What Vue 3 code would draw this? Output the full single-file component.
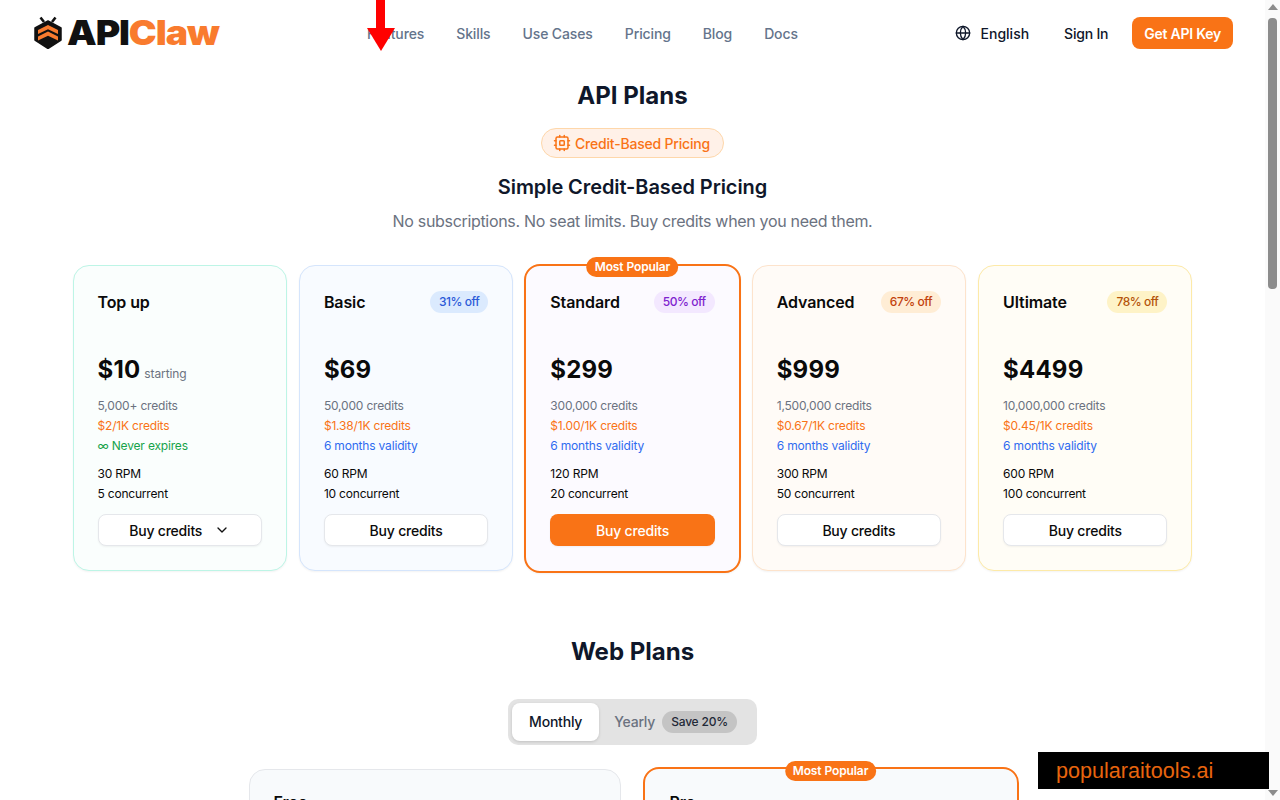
<script setup>
const navLinks = ['Features', 'Skills', 'Use Cases', 'Pricing', 'Blog', 'Docs']

const apiPlans = [
  { name: 'Top up', theme: 'teal', price: '$10', unit: 'starting', credits: '5,000+ credits', rate: '$2/1K credits', never: true, rpm: '30 RPM', conc: '5 concurrent', dropdown: true },
  { name: 'Basic', theme: 'blue', off: '31% off', price: '$69', credits: '50,000 credits', rate: '$1.38/1K credits', rpm: '60 RPM', conc: '10 concurrent' },
  { name: 'Standard', theme: 'purple', off: '50% off', price: '$299', credits: '300,000 credits', rate: '$1.00/1K credits', rpm: '120 RPM', conc: '20 concurrent', popular: true },
  { name: 'Advanced', theme: 'orange', off: '67% off', price: '$999', credits: '1,500,000 credits', rate: '$0.67/1K credits', rpm: '300 RPM', conc: '50 concurrent' },
  { name: 'Ultimate', theme: 'amber', off: '78% off', price: '$4499', credits: '10,000,000 credits', rate: '$0.45/1K credits', rpm: '600 RPM', conc: '100 concurrent' }
]
</script>

<template>
  <div class="shell">
    <div class="page">
      <header class="topbar">
        <a class="logo">
          <svg width="28" height="33" viewBox="0 0 28 33">
            <path d="M14 5 L27 12 V24 L14 32.5 L1 24 V12 Z" fill="#111" stroke="#111" stroke-width="1.5" stroke-linejoin="round" />
            <path d="M10 6 L6.5 1.5 M18 6 L21.5 1.5" stroke="#111" stroke-width="2.6" fill="none" />
            <path d="M4 14 L14 9 L24 14 V18 L14 13.2 L4 18 Z" fill="#f97b2e" />
            <path d="M4 20.5 L14 15.5 L24 20.5 V24.5 L14 19.7 L4 24.5 Z" fill="#f97b2e" />
          </svg>
          <span class="logo-text"><span>API</span><span class="claw">Claw</span></span>
        </a>
        <nav class="nav">
          <a v-for="link in navLinks" :key="link">{{ link }}</a>
        </nav>
        <div class="actions">
          <span class="lang">
            <svg width="16" height="16" viewBox="0 0 24 24" fill="none" stroke="#0f172a" stroke-width="2" stroke-linecap="round" stroke-linejoin="round">
              <circle cx="12" cy="12" r="10" />
              <path d="M12 2a14.5 14.5 0 0 0 0 20 14.5 14.5 0 0 0 0-20" />
              <path d="M2 12h20" />
            </svg>
            English
          </span>
          <span class="signin">Sign In</span>
          <button class="cta">Get API Key</button>
        </div>
      </header>

      <main class="content">
        <h2 class="section-title">API Plans</h2>
        <div class="pill">
          <svg width="18" height="18" viewBox="0 0 24 24" fill="none" stroke="#f97316" stroke-width="2" stroke-linecap="round" stroke-linejoin="round">
            <rect x="4" y="4" width="16" height="16" rx="2" />
            <rect x="9" y="9" width="6" height="6" rx="1" />
            <path d="M15 2v2M15 20v2M2 15h2M2 9h2M20 15h2M20 9h2M9 2v2M9 20v2" />
          </svg>
          Credit-Based Pricing
        </div>
        <h3 class="subtitle">Simple Credit-Based Pricing</h3>
        <p class="lead">No subscriptions. No seat limits. Buy credits when you need them.</p>

        <div class="api-grid">
          <div v-for="plan in apiPlans" :key="plan.name" class="plan" :class="[plan.theme, { popular: plan.popular }]">
            <span v-if="plan.popular" class="popular-tag">Most Popular</span>
            <div class="plan-head">
              <span class="plan-name">{{ plan.name }}</span>
              <span v-if="plan.off" class="off">{{ plan.off }}</span>
            </div>
            <div class="price">{{ plan.price }}<span v-if="plan.unit" class="unit">{{ plan.unit }}</span></div>
            <div class="facts">
              <div class="credits">{{ plan.credits }}</div>
              <div class="rate">{{ plan.rate }}</div>
              <div v-if="plan.never" class="never"><span class="inf">∞</span> Never expires</div>
              <div v-else class="valid">6 months validity</div>
            </div>
            <div class="limits">
              <div>{{ plan.rpm }}</div>
              <div>{{ plan.conc }}</div>
            </div>
            <button class="buy" :class="{ solid: plan.popular }">
              Buy credits
              <svg v-if="plan.dropdown" class="chev" width="16" height="16" viewBox="0 0 24 24" fill="none" stroke="#111" stroke-width="2" stroke-linecap="round" stroke-linejoin="round">
                <path d="m6 9 6 6 6-6" />
              </svg>
            </button>
          </div>
        </div>

        <h2 class="section-title web-title">Web Plans</h2>
        <div class="toggle">
          <span class="tab active">Monthly</span>
          <span class="tab">Yearly <span class="save">Save 20%</span></span>
        </div>

        <div class="web-grid">
          <div class="web-card"><span class="web-name">Free</span></div>
          <div class="web-card pro">
            <span class="popular-tag">Most Popular</span>
            <span class="web-name">Pro</span>
          </div>
        </div>
      </main>
    </div>

    <aside class="scrollbar">
      <span class="arrow up"></span>
      <span class="thumb"></span>
      <span class="arrow down"></span>
    </aside>

    <div class="red-arrow">
      <span class="shaft"></span>
      <span class="head"></span>
    </div>
    <div class="watermark">popularaitools.ai</div>
  </div>
</template>

<style>
html, body { margin: 0; background: #fff; overflow: hidden; }
</style>

<style scoped>
.shell {
  position: relative;
  display: flex;
  width: 1280px;
  height: 800px;
  overflow: hidden;
  font-family: Inter, "Noto Sans", sans-serif;
  color: #0f172a;
}
.page {
  flex: 1;
  min-width: 0;
  overflow: hidden;
}

.topbar {
  display: flex;
  align-items: center;
  height: 66px;
  padding: 0 32px 0 34px;
}
.logo {
  display: flex;
  align-items: center;
  gap: 5px;
  width: 333px;
  flex-shrink: 0;
  margin-top: -1px;
}
.logo-text {
  display: inline-block;
  font-size: 34px;
  font-weight: 900;
  line-height: 34px;
  color: #111;
  letter-spacing: -1px;
  transform: scaleX(1.1);
  transform-origin: left center;
}
.claw { color: #f97b2e; }
.nav {
  display: flex;
  gap: 32px;
  font-size: 14px;
  font-weight: 500;
  letter-spacing: -0.12px;
  color: #64748b;
}
.actions {
  margin-left: auto;
  display: flex;
  align-items: center;
  font-size: 14px;
  font-weight: 500;
}
.lang {
  display: flex;
  align-items: center;
  gap: 10px;
  margin-right: 35px;
}
.signin { margin-right: 24px; letter-spacing: -0.2px; }
.cta {
  height: 32px;
  padding: 0 12px;
  border: none;
  border-radius: 8px;
  background: #f97316;
  color: #fff;
  font: 600 14px Inter, sans-serif;
  letter-spacing: -0.25px;
}

.content {
  display: flex;
  flex-direction: column;
  align-items: center;
}
.section-title {
  margin: 14px 0 0;
  font-size: 24px;
  line-height: 32px;
  font-weight: 700;
}
.pill {
  display: flex;
  align-items: center;
  gap: 4px;
  height: 30px;
  box-sizing: border-box;
  margin-top: 16px;
  padding: 0 13px 0 11px;
  border: 1px solid #fed7aa;
  border-radius: 15px;
  background: #fff1e8;
  color: #f97316;
  font-size: 14px;
  font-weight: 500;
  letter-spacing: -0.2px;
}
.subtitle {
  margin: 15px 0 0;
  font-size: 20px;
  line-height: 28px;
  font-weight: 600;
  letter-spacing: -0.08px;
}
.lead {
  margin: 8px 0 0;
  font-size: 16px;
  line-height: 24px;
  letter-spacing: -0.32px;
  color: #6b7280;
}

.api-grid {
  display: grid;
  grid-template-columns: repeat(5, 1fr);
  gap: 12px;
  width: 1120px;
  margin-top: 32px;
}
.plan {
  position: relative;
  box-sizing: border-box;
  padding: 24px;
  border: 1px solid #e5e7eb;
  border-radius: 16px;
  box-shadow: 0 1px 2px rgba(0, 0, 0, 0.05);
  color: #0a0a0a;
}
.plan.teal { background: #fafefd; border-color: #bdf5e6; }
.plan.blue { background: #f8fbff; border-color: #d5e5fc; }
.plan.purple { background: #fcfaff; }
.plan.orange { background: #fffbf7; border-color: #fde3cc; }
.plan.amber { background: #fffdf6; border-color: #fdeaa8; }
.plan.popular {
  margin: -1px -1px -2px;
  border: 2px solid #f97316;
  padding: 24px 24px 25px;
}
.popular-tag {
  position: absolute;
  top: -9px;
  left: 50%;
  transform: translateX(-50%);
  height: 20px;
  padding: 0 8px;
  border-radius: 10px;
  background: #f97316;
  color: #fff;
  font-size: 12px;
  font-weight: 600;
  letter-spacing: -0.1px;
  line-height: 20px;
  white-space: nowrap;
}
.plan-head {
  display: flex;
  align-items: center;
  justify-content: space-between;
  height: 24px;
}
.plan-name {
  font-size: 16px;
  font-weight: 600;
  letter-spacing: -0.1px;
}
.off {
  height: 22px;
  padding: 0 9px;
  border-radius: 11px;
  font-size: 12px;
  font-weight: 500;
  letter-spacing: -0.45px;
  line-height: 22px;
}
.blue .off { background: #dbeafe; color: #2b5ad8; }
.purple .off { background: #f3e8ff; color: #7e22ce; }
.orange .off { background: #ffedd5; color: #c2410c; }
.amber .off { background: #fef3c7; color: #b45309; }
.price {
  margin-top: 40px;
  font-size: 24px;
  line-height: 32px;
  font-weight: 700;
  letter-spacing: 0.2px;
}
.unit {
  margin-left: 4px;
  font-size: 12px;
  font-weight: 400;
  line-height: 1;
  letter-spacing: -0.1px;
  color: #6b7280;
}
.facts {
  margin-top: 10px;
  font-size: 12px;
  line-height: 20px;
  letter-spacing: -0.18px;
}
.credits { color: #6b7280; }
.rate { color: #f97316; }
.valid { color: #2f6bf0; }
.never { height: 20px; color: #16a34a; }
.inf { line-height: 0; }
.limits {
  margin-top: 8px;
  font-size: 12px;
  line-height: 20px;
  letter-spacing: -0.2px;
}
.buy {
  display: flex;
  align-items: center;
  justify-content: center;
  gap: 12px;
  width: 100%;
  height: 32px;
  margin-top: 10px;
  border: 1px solid #e5e7eb;
  border-radius: 8px;
  background: #fff;
  box-shadow: 0 1px 2px rgba(0, 0, 0, 0.05);
  color: #0a0a0a;
  font: 500 14px Inter, sans-serif;
  letter-spacing: -0.2px;
}
.buy.solid {
  border: none;
  background: #f97316;
  color: #fff;
}

.section-title.web-title { margin-top: 65px; }
.toggle {
  display: flex;
  align-items: center;
  box-sizing: border-box;
  height: 46px;
  margin-top: 31px;
  padding: 4px;
  border-radius: 10px;
  background: #e3e3e3;
  font-size: 14px;
  font-weight: 500;
  letter-spacing: -0.2px;
}
.tab {
  display: flex;
  align-items: center;
  gap: 7px;
  box-sizing: border-box;
  height: 38px;
  padding: 0 16px 1px 15px;
  color: #6b7280;
}
.tab.active {
  padding: 0 17px 1px;
  border-radius: 8px;
  background: #fff;
  box-shadow: 0 1px 3px rgba(0, 0, 0, 0.15);
  color: #0f172a;
}
.save {
  height: 22px;
  padding: 0 9px;
  border-radius: 11px;
  background: #c4c4c4;
  color: #1f2937;
  font-size: 12px;
  line-height: 22px;
}
.web-grid {
  display: grid;
  grid-template-columns: 372px 372px;
  gap: 24px;
  margin-top: 24px;
  height: 220px;
}
.web-card {
  position: relative;
  box-sizing: border-box;
  padding: 20px 24px;
  border: 1px solid #e5e7eb;
  border-radius: 16px;
  background: #f8fafc;
  color: #0a0a0a;
}
.web-card.pro {
  margin: -2px;
  border: 2px solid #f97316;
  padding: 21px 25px;
}
.web-card .popular-tag { top: -8px; }
.web-name {
  font-size: 16px;
  font-weight: 600;
  line-height: 24px;
}

.scrollbar {
  position: relative;
  display: flex;
  flex-direction: column;
  align-items: center;
  flex: 0 0 15px;
  height: 800px;
  background: #fafafa;
}
.arrow {
  width: 0;
  height: 0;
  border-left: 5px solid transparent;
  border-right: 5px solid transparent;
}
.arrow.up {
  margin-top: 4px;
  border-bottom: 6px solid #8c8c8c;
}
.thumb {
  width: 9px;
  height: 271px;
  margin-top: 8px;
  border-radius: 4px;
  background: #8c8c8c;
}
.arrow.down {
  margin-top: auto;
  margin-bottom: 4px;
  border-top: 6px solid #8c8c8c;
}

.red-arrow {
  position: absolute;
  top: 0;
  left: 366px;
  display: flex;
  flex-direction: column;
  align-items: center;
  width: 29px;
}
.shaft {
  width: 9px;
  height: 28px;
  background: #f00;
}
.head {
  width: 0;
  height: 0;
  border-left: 14.5px solid transparent;
  border-right: 14.5px solid transparent;
  border-top: 23px solid #f00;
}
.watermark {
  position: absolute;
  top: 752px;
  left: 1038px;
  box-sizing: border-box;
  width: 231px;
  height: 37px;
  padding-left: 18px;
  background: #000;
  color: #e8650e;
  font-family: "Liberation Sans", Arial, sans-serif;
  font-size: 21.6px;
  line-height: 37px;
}
</style>
